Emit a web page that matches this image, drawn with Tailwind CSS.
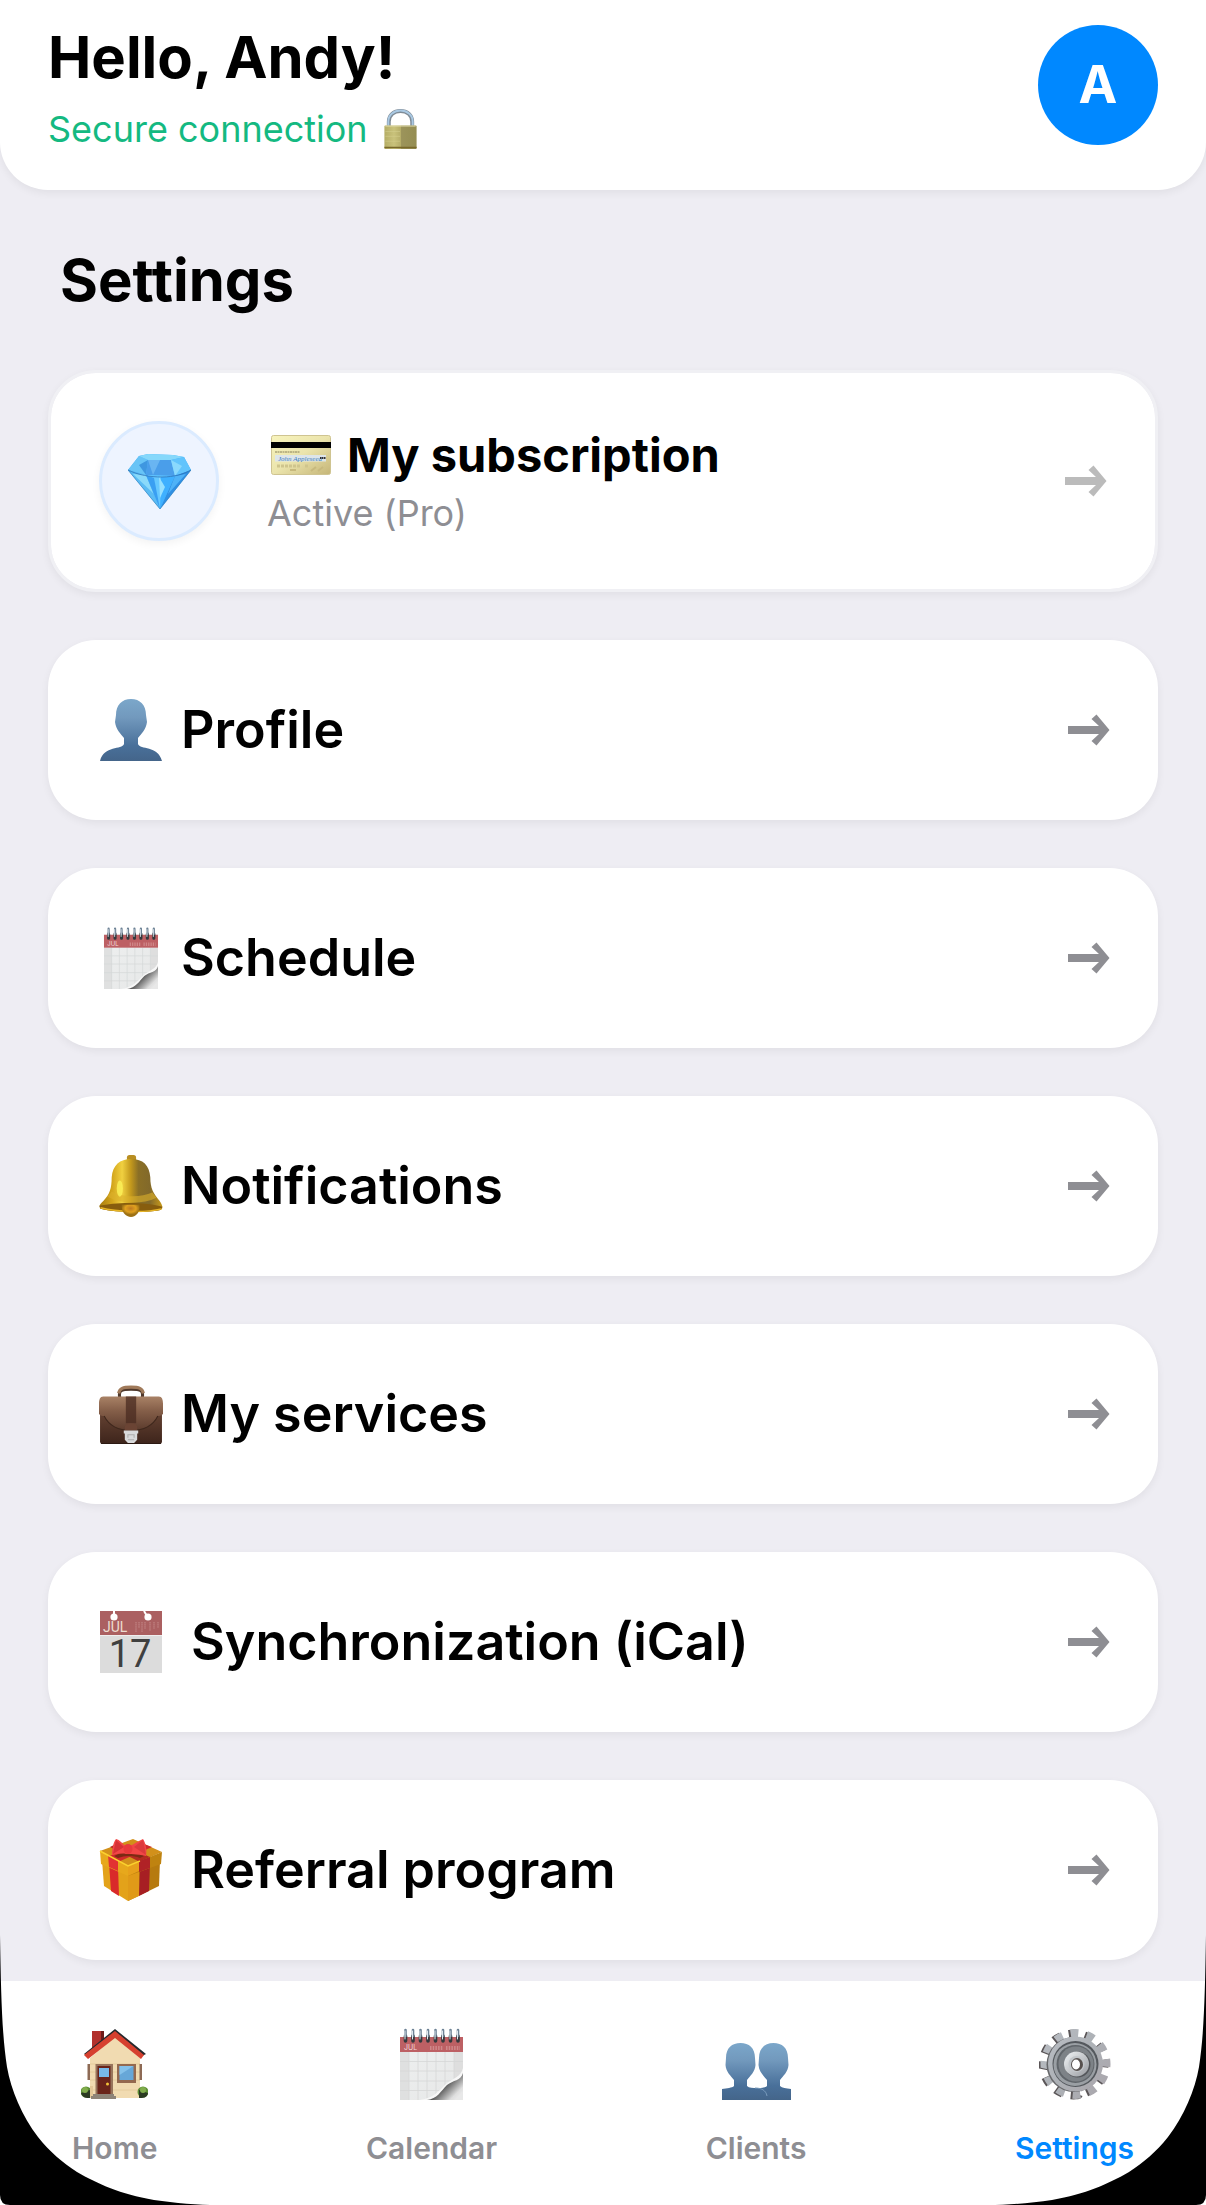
<!DOCTYPE html>
<html lang="en">
<head>
  <meta charset="UTF-8" />
  <meta name="viewport" content="width=device-width, initial-scale=1.0"/>
  <title>Settings</title>
  <script src="https://cdn.jsdelivr.net/npm/@tailwindcss/browser@4"></script>
</head>
<body class="bg-[#eeedf3] font-['Inter',sans-serif] text-black">

  <!-- Shared icons -->
  <svg class="absolute size-0" aria-hidden="true">
    <defs>
      <linearGradient id="person" x1="0" y1="0" x2="0" y2="1">
        <stop offset="0" stop-color="#7ba7ca"/><stop offset=".3" stop-color="#7299bd"/><stop offset=".75" stop-color="#49709a"/><stop offset="1" stop-color="#44658a"/>
      </linearGradient>
      <linearGradient id="page" x1="0" y1="0" x2="1" y2="1">
        <stop offset="0" stop-color="#eef0f0"/><stop offset="1" stop-color="#e6e7e7"/>
      </linearGradient>
      <linearGradient id="curl" gradientUnits="userSpaceOnUse" x1="40" y1="53" x2="57" y2="70">
        <stop offset="0" stop-color="#c9c9c9"/><stop offset=".3" stop-color="#5a5a5a"/><stop offset=".5" stop-color="#8b8b8b"/><stop offset=".85" stop-color="#dedede"/><stop offset="1" stop-color="#e8e8e8"/>
      </linearGradient>
    </defs>
    <symbol id="arrow" viewBox="0 0 42 32">
      <path fill="currentColor" d="M41.500 16 28.500 .5 23.500 5 31 12H0v8h31l-7.500 7 5 4.500z"/>
    </symbol>
    <symbol id="calendar" viewBox="0 0 63 72">
      <rect y="9" width="63" height="63" fill="url(#page)"/>
      <rect y="24" width="9" height="48" fill="#dfe0e0"/>
      <rect x="54" y="24" width="9" height="48" fill="#dedede"/>
      <path d="M9 24v48M18 24v48M27 24v48M36 24v48M45 24v48M54 24v48M0 33.500h63M0 43h63M0 53h63M0 62.500h63" stroke="#d5d7d7" stroke-width=".8"/>
      <rect y="9" width="63" height="15" fill="#bd6064"/>
      <path d="M30 20h13M46 20h14" stroke="#cf8789" stroke-width="4" stroke-dasharray="1.500 1.200"/>
      <path d="M63 40C61 49 53 50 46 56 39 63 33 70 20 72H63Z" fill="#f7f7f7"/>
      <path d="M63 45C61 53 53 52 47 57 41 63 37 71 27 72H63Z" fill="url(#curl)"/>
      <g stroke="#33393d" stroke-width="3.600" stroke-linecap="round">
        <path d="M5.500 8v5M13 8v5M20.500 8v5M28 8v5M35.500 8v5M43 8v5M50.500 8v5M58 8v5"/>
      </g>
      <g stroke="#6d8295" stroke-width="2.600" stroke-linecap="round">
        <path d="M5.500 2v6M13 2v6M20.500 2v6M28 2v6M35.500 2v6M43 2v6M50.500 2v6M58 2v6"/>
      </g>
      <g stroke="#dfe8ef" stroke-width="1" stroke-linecap="round">
        <path d="M5 3v8M12.500 3v8M20 3v8M27.500 3v8M35 3v8M42.500 3v8M50 3v8M57.500 3v8"/>
      </g>
    </symbol>
  </svg>

  <div class="relative min-h-screen flex flex-col overflow-hidden">

    <header class="flex items-start justify-between bg-white px-12 pt-[25px] pb-[41px] rounded-b-[48px] shadow-[0_3px_9px_rgba(0,0,0,0.06)]">
      <div>
        <h1 class="text-[58px] leading-16 font-bold">Hello, Andy!</h1>
        <p class="mt-5 flex items-center gap-4 text-[36px] leading-10 text-[#14b981]">
          Secure connection
          <svg class="w-[33px] h-10" viewBox="0 0 33 41" aria-hidden="true">
            <defs><linearGradient id="brass"><stop offset="0" stop-color="#b5ad65"/><stop offset=".3" stop-color="#c9c27b"/><stop offset=".5" stop-color="#b6ae69"/><stop offset=".52" stop-color="#9c945b"/><stop offset="1" stop-color="#948d52"/></linearGradient></defs>
            <path d="M4.500 18V13C4.500 6 10 2 16.500 2S28.500 6 28.500 13V18" fill="none" stroke="#7f8b96" stroke-width="4"/>
            <path d="M4 18V13C4 6 10 1.500 16.500 1.500S29 6 29 13V18" fill="none" stroke="#a9c8e2" stroke-width="2"/>
            <rect y="17" width="33" height="24" rx="1" fill="url(#brass)"/>
            <path d="M1 17.500h31" stroke="#ded9a8"/>
            <path d="M0 39.500h33" stroke="#79682a" stroke-width="1.500"/>
            <path d="M1 23h15M1 28h15M1 33h15" stroke="#d4ce8e" stroke-width=".6"/>
          </svg>
        </p>
      </div>
      <div class="size-[120px] rounded-full bg-[#0088ff] text-white flex items-center justify-center text-[52px] leading-16 font-bold">A</div>
    </header>

    <main class="flex-1 px-12 pt-[54px] pb-[21px]">
      <h2 class="pl-3 mb-[54px] text-[58px] leading-[72px] font-bold">Settings</h2>

      <div class="flex flex-col gap-12">
        <a href="#subscription" class="flex items-center gap-12 h-[222px] px-12 bg-white bg-clip-padding rounded-[48px] border-3 border-[#f0f0f4] shadow-[0_3px_9px_rgba(0,0,0,0.06)]">
          <span class="size-[120px] shrink-0 rounded-full bg-[#eef4ff] border-3 border-[#dbebff] shadow-[0_3px_9px_rgba(0,0,0,0.05)] flex items-center justify-center">
            <svg class="w-[63px] h-[55px]" viewBox="0 0 63 55" aria-hidden="true">
              <path d="M0 16 11 2 20 0 45 1 56 3 63 16 32 55Z" fill="#46b1fb"/>
              <path d="M0 16 11 2 20 6 18 21Z" fill="#68c4f6"/>
              <path d="M11 2 20 0 45 1 56 3 43 6H20Z" fill="#86d8fb"/>
              <path d="M20 6 11 11 18 21Z" fill="#3f97e0"/>
              <path d="M20 6H43L47 22 18 21Z" fill="#4a9eea"/>
              <path d="M20 6 25 21 32 6Z" fill="#69b5f2"/>
              <path d="M43 6 56 3 63 16 47 22Z" fill="#62c4fc"/>
              <path d="M43 6 54 12 47 22Z" fill="#8ad9fd"/>
              <path d="M0 16 18 21 32 55Z" fill="#5bbcf4"/>
              <path d="M5 20 18 21 26 40Z" fill="#8adafa"/>
              <path d="M18 21 47 22 32 55Z" fill="#66c8ff"/>
              <path d="M18 21 26 24 32 55Z" fill="#3a9ff2"/>
              <path d="M33 23 47 22 32 55Z" fill="#3fb0ff"/>
              <path d="M31 23 37 33 32 44Z" fill="#96e0ff"/>
              <path d="M47 22 63 16 32 55Z" fill="#2f8fe3"/>
              <path d="M47 22 58 20 40 40Z" fill="#4fb2f7"/>
              <path d="M0 16C10 21 22 23 34 23S56 20 63 16" fill="none" stroke="#2f74b8" stroke-width=".8"/>
              <path d="M0 16 32 55 63 16" fill="none" stroke="#347fbb" stroke-width=".6"/>
            </svg>
          </span>
          <span class="flex-1">
            <span class="flex items-center gap-4 pl-1 text-[47px] leading-16 font-bold">
              <svg class="w-[60px] h-10" viewBox="0 0 60 40" aria-hidden="true">
                <defs><linearGradient id="card" x1="0" y1="0" x2="1" y2="1"><stop offset="0" stop-color="#f8f4bd"/><stop offset=".5" stop-color="#ebe4ac"/><stop offset="1" stop-color="#c5b577"/></linearGradient></defs>
                <rect x=".5" y=".5" width="59" height="39" rx="2" fill="url(#card)" stroke="#cfc491"/>
                <rect y="7" width="60" height="6" fill="#000"/>
                <path d="M4 17h25" stroke="#88805b" stroke-dasharray="2 .5"/>
                <rect x="4" y="20" width="51" height="6.500" fill="#dde5e9"/>
                <text x="7" y="26" font-size="7" font-style="italic" font-family="Liberation Serif, serif" font-weight="400" fill="#3d7fc0">John Appleseed</text>
                <path d="M49 23h6" stroke="#333" stroke-width="2" stroke-dasharray="1.500 .5"/>
                <path d="M6 31h24M34 31h4" stroke="#cfc58d" stroke-width="3" stroke-dasharray="3 1"/>
                <path d="M19 35h6M40 36l5-4M47 36l5-4" stroke="#c7b97d" stroke-width="2"/>
              </svg>
              My subscription
            </span>
            <span class="block text-[36px] leading-[52px] text-[#8e8e93]">Active (Pro)</span>
          </span>
          <svg class="w-[42px] h-8 text-[#bbbbbb]" aria-hidden="true"><use href="#arrow"/></svg>
        </a>

        <a href="#profile" class="flex items-center gap-[18px] h-[180px] pl-[51px] pr-12 bg-white rounded-[48px] shadow-[0_3px_9px_rgba(0,0,0,0.06)]">
          <svg class="w-16 h-[62px]" viewBox="0 0 62 62" aria-hidden="true">
            <path fill="url(#person)" d="M31 0C40 0 46 6 46 16L47 23C46 31 41 35 38 39V45C40 51 58 46 62 62H0C4 46 22 51 24 45V39C21 35 16 31 15 23L16 16C16 6 22 0 31 0Z"/>
          </svg>
          <span class="flex-1 text-[52px] leading-16 font-semibold">Profile</span>
          <svg class="w-[42px] h-8 text-[#8e8e93]" aria-hidden="true"><use href="#arrow"/></svg>
        </a>

        <a href="#schedule" class="flex items-center gap-[18px] h-[180px] pl-[51px] pr-12 bg-white rounded-[48px] shadow-[0_3px_9px_rgba(0,0,0,0.06)]">
          <svg class="w-16 h-[62px]" viewBox="0 0 63 72" aria-hidden="true">
            <use href="#calendar" width="63" height="72"/>
            <text x="4" y="22" font-size="7" fill="#f1d9da">JUL</text>
          </svg>
          <span class="flex-1 text-[52px] leading-16 font-semibold">Schedule</span>
          <svg class="w-[42px] h-8 text-[#8e8e93]" aria-hidden="true"><use href="#arrow"/></svg>
        </a>

        <a href="#notifications" class="flex items-center gap-[18px] h-[180px] pl-[51px] pr-12 bg-white rounded-[48px] shadow-[0_3px_9px_rgba(0,0,0,0.06)]">
          <svg class="w-16 h-[62px]" viewBox="0 0 62 61" aria-hidden="true">
            <defs>
              <linearGradient id="gold"><stop offset="0" stop-color="#a87c0e"/><stop offset=".2" stop-color="#d3a51c"/><stop offset=".36" stop-color="#f0d040"/><stop offset=".5" stop-color="#c3981c"/><stop offset=".62" stop-color="#8a6f26"/><stop offset=".8" stop-color="#82692a"/><stop offset="1" stop-color="#c89a1a"/></linearGradient>
              <radialGradient id="clapper" cx=".5" cy=".3"><stop offset="0" stop-color="#c07a20"/><stop offset=".6" stop-color="#e0a01e"/><stop offset="1" stop-color="#9d7115"/></radialGradient>
            </defs>
            <rect x="27" width="9" height="8" rx="2.500" fill="#b88e22"/>
            <path d="M31 4C43 4 49 10 50 22 50 33 53 38 59 45 62 49 63 53 60 54 45 57 17 57 1 53-1 50 0 49 4 45 10 39 12 33 12 22 13 10 20 4 31 4Z" fill="url(#gold)"/>
            <path d="M12 36C22 42 41 42 52 37L56 42C42 49 20 48 8 41Z" fill="#dcb12b" opacity=".6"/>
            <ellipse cx="20" cy="33" rx="3" ry="8" fill="#fbf35a" opacity=".8"/>
            <path d="M0 50C15 46 47 46 62 51L60 54C45 57 17 57 1 53Z" fill="#875d0e"/>
            <path d="M1 52C17 56 45 57 61 53" fill="none" stroke="#e8b626" stroke-width="1.500"/>
            <path d="M22 49H39C41 55 36 61 31 61S21 56 22 49Z" fill="url(#clapper)"/>
          </svg>
          <span class="flex-1 text-[52px] leading-16 font-semibold">Notifications</span>
          <svg class="w-[42px] h-8 text-[#8e8e93]" aria-hidden="true"><use href="#arrow"/></svg>
        </a>

        <a href="#services" class="flex items-center gap-[18px] h-[180px] pl-[51px] pr-12 bg-white rounded-[48px] shadow-[0_3px_9px_rgba(0,0,0,0.06)]">
          <svg class="w-16 h-[62px]" viewBox="0 0 62 60" aria-hidden="true">
            <defs>
              <linearGradient id="leather" x1="0" y1="0" x2="0" y2="1"><stop offset="0" stop-color="#a98266"/><stop offset=".4" stop-color="#86604a"/><stop offset="1" stop-color="#5b3b2d"/></linearGradient>
              <linearGradient id="leatherBase" x1="0" y1="0" x2="0" y2="1"><stop offset="0" stop-color="#6b4736"/><stop offset="1" stop-color="#3d241b"/></linearGradient>
            </defs>
            <path d="M20 14C19 7 21 6 31 6S43 7 42 14" fill="none" stroke="#4f382b" stroke-width="3"/>
            <path d="M19 10C20 5 23 4 31 4S42 5 43 10" fill="none" stroke="#a07a5a" stroke-width="3"/>
            <rect x="1" y="24" width="60" height="35" rx="2" fill="url(#leatherBase)"/>
            <path d="M4 13H58C61 13 62 16 62 20V30C60 32 58 32 57 32 53 40 45 46 31 46S9 40 5 32C3 32 2 32 0 30V20C0 16 1 13 4 13Z" fill="url(#leather)"/>
            <path d="M5 32C9 40 17 46 31 46S53 40 57 32" fill="none" stroke="#3e271c"/>
            <rect x="26" y="13" width="10" height="26" fill="#4a2b20" opacity=".75"/>
            <path d="M25 46V43C25 40 28 39 31 39S37 40 37 43V46Z" fill="#6b4434"/>
            <path d="M24 46H38V49H37V55L34 58H28L25 55V49H24Z" fill="#d9dadb"/>
            <path d="M28 53V50H34V53M28 55H34" fill="none" stroke="#adadad"/>
            <path d="M2 58.500H60" stroke="#2c1912"/>
          </svg>
          <span class="flex-1 text-[52px] leading-16 font-semibold">My services</span>
          <svg class="w-[42px] h-8 text-[#8e8e93]" aria-hidden="true"><use href="#arrow"/></svg>
        </a>

        <a href="#sync" class="flex items-center gap-7 h-[180px] pl-[51px] pr-12 bg-white rounded-[48px] shadow-[0_3px_9px_rgba(0,0,0,0.06)]">
          <svg class="w-16 h-[62px] overflow-visible" viewBox="0 0 62 62" aria-hidden="true">
            <rect width="62" height="62" fill="#dcdcdc"/>
            <rect width="62" height="24" fill="#ab6061"/>
            <path d="M0 24.500H62" stroke="#efefef"/>
            <path d="M14 0V5M44 0 47 5" stroke="#fff" stroke-width="2"/>
            <circle cx="14" cy="6" r="3.600" fill="#fff"/>
            <circle cx="48" cy="6" r="3.600" fill="#fff"/>
            <path d="M36 11V21M39 11V17M42 11V21M45 11V18M50 11V20M54 11V18M58 11V17" stroke="#c58a8a" stroke-width="1" stroke-dasharray="1.500 .6"/>
            <text x="3" y="21" font-size="14" font-family="Roboto, sans-serif" fill="#eddcd0">JUL</text>
            <text x="30" y="56" text-anchor="middle" font-size="38" font-family="Roboto, sans-serif" fill="#404040">17</text>
          </svg>
          <span class="flex-1 text-[52px] leading-16 font-semibold">Synchronization (iCal)</span>
          <svg class="w-[42px] h-8 text-[#8e8e93]" aria-hidden="true"><use href="#arrow"/></svg>
        </a>

        <a href="#referral" class="flex items-center gap-7 h-[180px] pl-[51px] pr-12 bg-white rounded-[48px] shadow-[0_3px_9px_rgba(0,0,0,0.06)]">
          <svg class="w-16 h-[62px]" viewBox="0 0 62 62" aria-hidden="true">
            <path d="M2 21 28 34V62L4 47Z" fill="#e3a21a"/>
            <path d="M28 34 60 21 59 47 28 62Z" fill="#b67a0f"/>
            <path d="M28 34 39 29V57L28 62Z" fill="#e09a18"/>
            <path d="M9 24 18 28 19 57 11 52Z" fill="#d92a2a"/>
            <path d="M40 28 50 24 49 52 39 57Z" fill="#a71f23"/>
            <path d="M0 12 33 0 62 13 28 28Z" fill="#d2901a"/>
            <path d="M9 17 44 5 52 8 18 23Z" fill="#cf2a2b"/>
            <path d="M18 4 50 18 40 23 10 8Z" fill="#b32a20"/>
            <path d="M0 12 28 27V37L1 25Z" fill="#e7a81c"/>
            <path d="M28 27 62 13 61 25 28 37Z" fill="#bf8310"/>
            <path d="M28 27 39 23V32L28 37Z" fill="#e7a01b"/>
            <path d="M8 16 18 21V32L9 28Z" fill="#e23232"/>
            <path d="M39 22 50 18V29L39 33Z" fill="#b02226"/>
            <path d="M0 12 28 27 40 22" fill="none" stroke="#fbd02e" stroke-width="1.500"/>
            <path d="M14 17C24 12 38 12 44 17L40 19C32 16 24 17 18 19Z" fill="#7c2a13"/>
            <path d="M16 0C13 3 12 12 12 16 17 15 22 14 26 15 30 15 36 15 46 17 47 12 46 4 43 0 38 2 34 5 32 6H24C22 4 20 1 16 0Z" fill="#f24646"/>
            <path d="M16 1 24 8 13 15Z" fill="#d73236"/>
            <path d="M43 1 34 8 46 16Z" fill="#dc3a3c"/>
            <ellipse cx="28" cy="10" rx="4.500" ry="5" fill="#e8393c"/>
          </svg>
          <span class="flex-1 text-[52px] leading-16 font-semibold">Referral program</span>
          <svg class="w-[42px] h-8 text-[#8e8e93]" aria-hidden="true"><use href="#arrow"/></svg>
        </a>
      </div>
    </main>

    <nav class="flex justify-between bg-white px-[72px] pt-[47px] pb-[37px] text-[30px] leading-10 font-semibold text-[#8e8e93]">
      <a href="#home" class="flex flex-col items-center gap-7">
        <svg class="w-[67px] h-[72px]" viewBox="0 -2 67 72" aria-hidden="true">
          <path d="M11 1H23V12L11 22Z" fill="#b2302c"/>
          <path d="M20 1H23V12L20 15Z" fill="#6d1a18"/>
          <path d="M9 28 34 7 59 28V68H9Z" fill="#f1dbb1"/>
          <path d="M9 34H59M9 42H59M9 50H59M9 60H59" stroke="#e3c998" stroke-width=".8"/>
          <path d="M3 24 34-1 65 24 61 26 34 4 6 26Z" fill="#26282c"/>
          <path d="M34 1 63 25 60 29 34 8 7 29 3 25Z" fill="#d6402f"/>
          <rect x="6.500" y="34" width="2.500" height="16" fill="#8d6a55"/>
          <rect x="58.500" y="34" width="2.500" height="16" fill="#8d6a55"/>
          <circle cx="5" cy="62" r="5.500" fill="#5d8f36"/><circle cx="62" cy="62" r="5.500" fill="#5d8f36"/>
          <path d="M0 63C2 68 5 68 9 68V60M67 63C66 68 62 68 58 68V60" fill="#2b3a22"/>
          <circle cx="4" cy="60" r="3" fill="#81ad4c"/><circle cx="62" cy="60" r="3" fill="#81ad4c"/>
          <rect x="9" y="56" width="3" height="12" fill="#e4c899"/>
          <rect x="14.500" y="34" width="17.500" height="31" fill="#98755c"/>
          <rect x="16.500" y="36" width="13" height="28" fill="#6a241a"/>
          <rect x="18" y="38" width="10" height="9" fill="#78b9e8"/>
          <circle cx="26.500" cy="54" r="1.500" fill="#f5c53a"/>
          <rect x="36" y="34" width="19" height="19" fill="#94694f"/>
          <rect x="38.500" y="36" width="14" height="14" fill="#67a7d8"/>
          <path d="M38.500 36H52.500L38.500 45Z" fill="#85c1ea"/>
          <path d="M12 64H33V66H35V69H10V66H12Z" fill="#8e8478"/>
        </svg>
        Home
      </a>
      <a href="#calendar-page" class="flex flex-col items-center gap-7">
        <svg class="w-[63px] h-[72px]" viewBox="0 0 63 72" aria-hidden="true">
          <use href="#calendar" width="63" height="72"/>
          <text x="4" y="22" font-size="7" font-weight="400" fill="#f1d9da">JUL</text>
        </svg>
        Calendar
      </a>
      <a href="#clients" class="flex flex-col items-center gap-7">
        <svg class="w-[69px] h-[72px]" viewBox="0 -15 69 72" aria-hidden="true">
          <path fill="url(#person)" d="M18.500 0C27 0 33 5 33 15L33.500 22C33 29 28 33 25 37V43C27 45 31 45 35 45 39 45 43 45 45 43V37C42 33 37 29 36.500 22L37 15C37 5 43 0 51.500 0S66 5 66 15L66.500 22C66 29 61 33 58 37V43C60 45 64 45 69 46V57H0V46C5 45 10 45 12 43V37C9 33 4 29 3.500 22L4 15C4 5 10 0 18.500 0Z"/>
          <path d="M33 45C39 45 44 47 45 53" fill="none" stroke="#7a9cbd" stroke-width="1"/>
        </svg>
        Clients
      </a>
      <a href="#settings" aria-current="page" class="flex flex-col items-center gap-7 text-[#0088ff]">
        <svg class="size-[72px]" viewBox="0 0 72 72" aria-hidden="true">
          <defs>
            <linearGradient id="steel" x1="0" y1="0" x2="1" y2="1"><stop offset="0" stop-color="#b9bdc3"/><stop offset=".5" stop-color="#adb1b6"/><stop offset="1" stop-color="#aaa6ac"/></linearGradient>
            <linearGradient id="hub" x1="0" y1="0" x2="1" y2="1"><stop offset="0" stop-color="#f2f5f7"/><stop offset="1" stop-color="#989ba0"/></linearGradient>
          </defs>
          <g fill="none" stroke-width="9" stroke-dasharray="1 1.100">
            <circle cx="34.500" cy="36.500" r="30.500" pathLength="25.200" stroke="#5a5557" transform="rotate(-9 34.500 36.500)"/>
            <circle cx="36.500" cy="36" r="30.500" pathLength="25.200" stroke="url(#steel)" transform="rotate(-9 36.500 36)"/>
          </g>
          <circle cx="35" cy="36.500" r="27.500" fill="#67686b"/>
          <circle cx="36.500" cy="36" r="27.500" fill="url(#steel)"/>
          <circle cx="36.500" cy="36" r="23" fill="#54585d"/>
          <circle cx="36" cy="36.500" r="21.500" fill="#9a9fa4"/>
          <circle cx="36.500" cy="36" r="19" fill="#60656a"/>
          <circle cx="37" cy="36" r="17.500" fill="#7d8287"/>
          <circle cx="38.500" cy="36.500" r="13" fill="#53565a"/>
          <circle cx="37.500" cy="36" r="12.500" fill="url(#hub)"/>
          <circle cx="37.500" cy="36" r="8" fill="#c3c7cb"/>
          <ellipse cx="38" cy="36.500" rx="6" ry="6.500" fill="#57514f"/>
          <ellipse cx="37" cy="36.500" rx="4" ry="5" fill="#fff"/>
        </svg>
        Settings
      </a>
    </nav>

    <!-- Rounded device corners over the bottom of the screen -->
    <svg class="absolute left-0 bottom-0 w-[220px] h-[270px] pointer-events-none" viewBox="0 0 220 270" aria-hidden="true">
      <path d="M0 0C1 60 2 100 7 132 11 155 22 181 38 202 50 217 62 227 77 237 98 249 120 259 154 265 175 268 198 270 218 270H0Z"/>
      <path d="M0 260V270H10Q0 270 0 260Z" fill="#fff"/>
    </svg>
    <svg class="absolute right-0 bottom-0 w-[220px] h-[270px] pointer-events-none -scale-x-100" viewBox="0 0 220 270" aria-hidden="true">
      <path d="M0 0C1 60 2 100 7 132 11 155 22 181 38 202 50 217 62 227 77 237 98 249 120 259 154 265 175 268 198 270 218 270H0Z"/>
      <path d="M0 260V270H10Q0 270 0 260Z" fill="#fff"/>
    </svg>
  </div>
</body>
</html>
